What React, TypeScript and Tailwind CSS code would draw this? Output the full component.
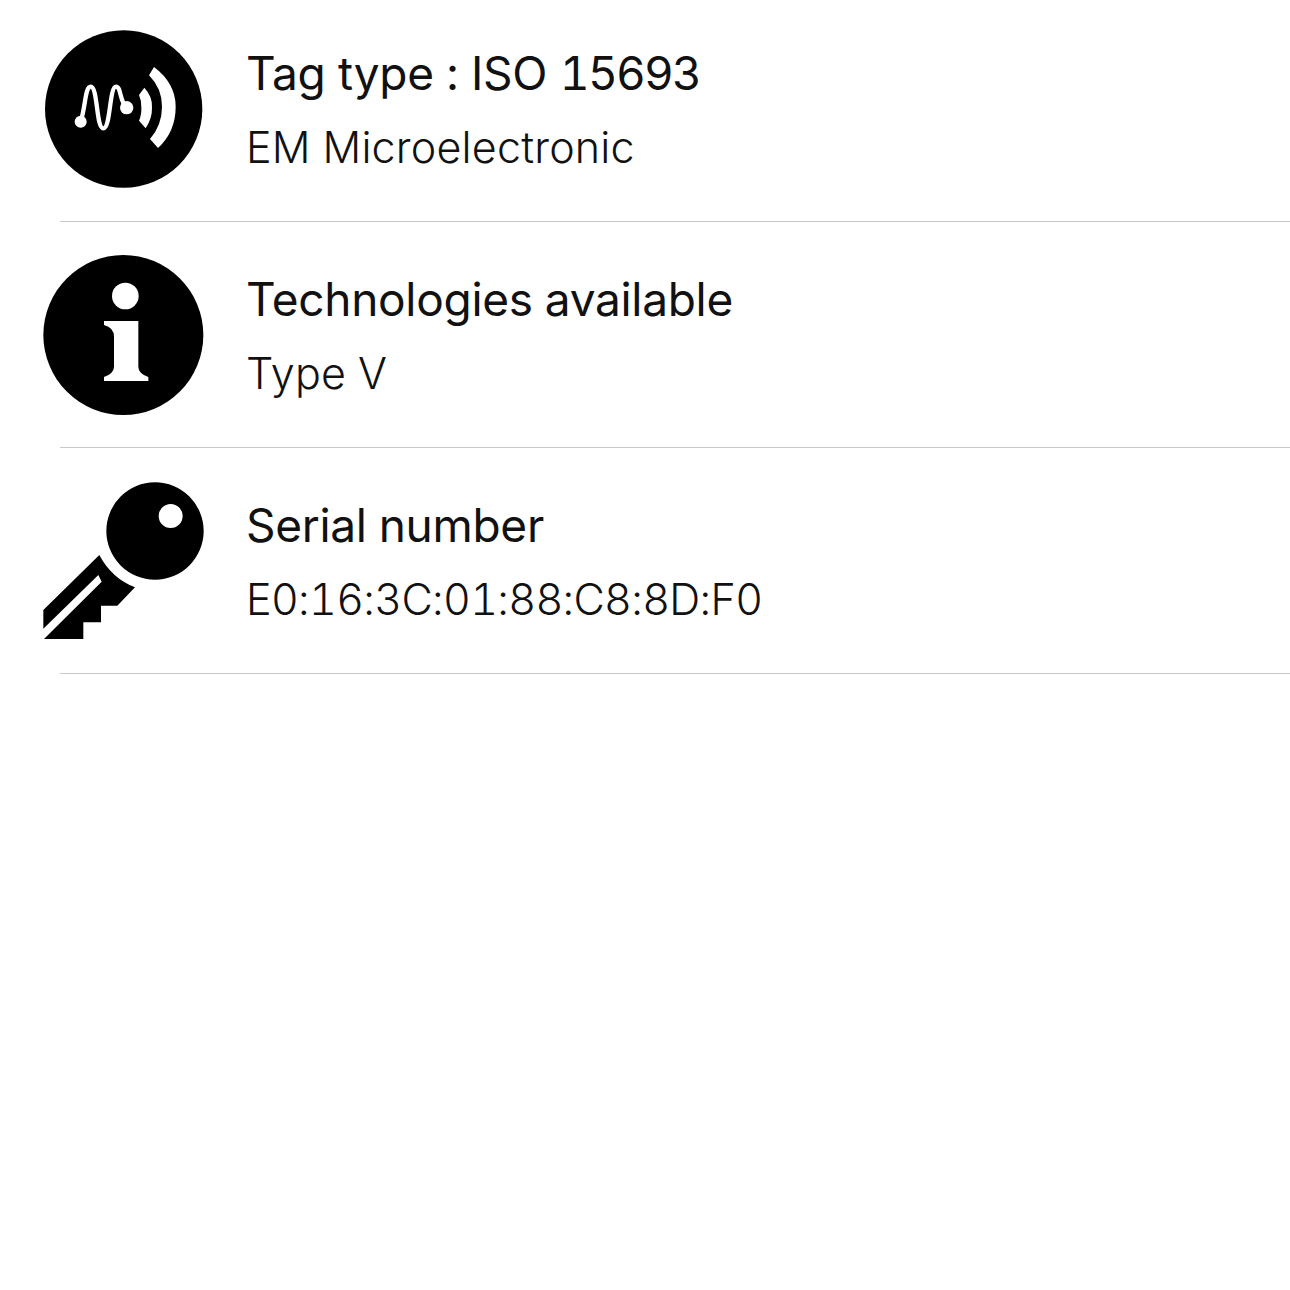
import React from 'react';

const TagIcon = () => (
  <svg viewBox="0 0 570 540" className="w-[190px] h-[180px] shrink-0">
    <circle cx="281" cy="267" r="236" fill="#000" />
    <circle cx="152" cy="305" r="18" fill="#fff" />
    <circle cx="290" cy="263" r="20" fill="#fff" />
    <path
      d="M152 305 C167 260 165 200 182 200 C204 200 198 325 220 325 C242 325 238 200 258 200 C274 200 268 245 290 263"
      fill="none"
      stroke="#fff"
      strokeWidth="13"
    />
    <path d="M343 203 Q368 230 366 262 Q367 295 347 325 L327 302 Q335 285 334 262 Q335 243 327 225 Z" fill="#fff" />
    <path d="M372 141 Q437 190 437 260 Q437 335 384 384 L360 357 Q396 315 396 260 Q396 205 357 166 Z" fill="#fff" />
  </svg>
);

const InfoIcon = () => (
  <svg viewBox="0 0 570 540" className="w-[190px] h-[180px] shrink-0">
    <circle cx="280" cy="270" r="240" fill="#000" />
    <circle cx="286" cy="153" r="40" fill="#fff" />
    <path
      d="M222 228 L325 228 L325 365 Q325 385 355 396 L355 408 L222 408 L222 396 Q252 385 252 365 L252 275 Q252 248 222 240 Z"
      fill="#fff"
    />
  </svg>
);

const KeyIcon = () => (
  <svg viewBox="0 0 570 540" className="w-[190px] h-[180px] shrink-0">
    <path
      fillRule="evenodd"
      d="M375 37 A146 146 0 1 0 375 329 A146 146 0 1 0 375 37 Z M422 102 A36 36 0 1 1 422 174 A36 36 0 1 1 422 102 Z"
      fill="#000"
    />
    <path
      d="M40 420 L208 255 Q245 325 315 352 L262 407 L213 407 L213 457 L160 457 L160 507 L42 507 L215 335 L205 315 L40 476 Z"
      fill="#000"
    />
  </svg>
);

const rows = [
  {
    id: 'tag',
    icon: <TagIcon />,
    pad: 'pt-6',
    title: (
      <span className="[word-spacing:0.6px]">
        Tag type : ISO <span className="tracking-[-1.8px]">15693</span>
      </span>
    ),
    value: 'EM Microelectronic',
    valueClass: 'tracking-[0.2px]',
  },
  {
    id: 'tech',
    icon: <InfoIcon />,
    pad: 'pt-[23px]',
    title: 'Technologies available',
    value: 'Type V',
    valueClass: 'tracking-[0.2px]',
  },
  {
    id: 'serial',
    icon: <KeyIcon />,
    pad: 'pt-[22px]',
    title: 'Serial number',
    value: 'E0:16:3C:01:88:C8:8D:F0',
    valueClass: 'tracking-[-0.65px]',
  },
];

export default function App() {
  return (
    <div className="w-[1290px] h-[1290px] overflow-hidden bg-white font-['Inter',sans-serif] text-[#111]">
      <div className="-mt-1">
        {rows.map((row) => (
          <div key={row.id} className="h-[226px] flex flex-col">
            <div className="flex-1 flex">
              <div className={`pl-[30px] ${row.pad}`}>{row.icon}</div>
              <div className="ml-[26px] pt-[45px]">
                <div className="text-[46px] leading-[64px] tracking-[-0.3px] tabular-nums">{row.title}</div>
                <div className={`mt-[10px] text-[43px] leading-[64px] font-light tabular-nums ${row.valueClass}`}>{row.value}</div>
              </div>
            </div>
            <div className="ml-[60px] h-px bg-[#c8c8c8]" />
          </div>
        ))}
      </div>
    </div>
  );
}
